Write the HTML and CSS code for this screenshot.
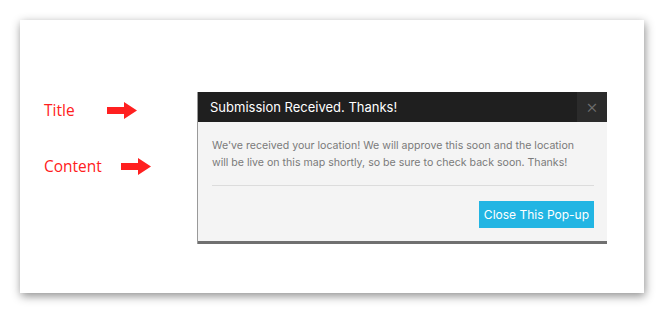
FILE: index.html
```html
<!DOCTYPE html>
<html>
<head>
    <title>Popup annotation</title>
    <link rel="stylesheet" href="styles.css">
</head>
<body>
    <div class="sheet">
        <div class="labels">
            <div class="label-row label-title">
                <span class="label">Title</span>
                <svg class="arrow" width="30" height="17" viewBox="0 0 30 17"><path d="M0 5 H17 V0 L30 8.5 L17 17 V12 H0 Z" fill="#ff2020"/></svg>
            </div>
            <div class="label-row label-content">
                <span class="label">Content</span>
                <svg class="arrow" width="30" height="17" viewBox="0 0 30 17"><path d="M0 5 H17 V0 L30 8.5 L17 17 V12 H0 Z" fill="#ff2020"/></svg>
            </div>
        </div>

        <div class="popup">
            <div class="popup-header">
                <div class="popup-title">Submission Received. Thanks!</div>
                <div class="popup-close">&times;</div>
            </div>
            <div class="popup-body">
                <p class="popup-text">We've received your location! We will approve this soon and the location will be live on this map shortly, so be sure to check back soon. Thanks!</p>
                <div class="popup-footer">
                    <button class="popup-button">Close This Pop-up</button>
                </div>
            </div>
            <div class="popup-map"></div>
        </div>
    </div>
</body>
</html>
```

FILE: styles.css
```css
body {
    margin: 0;
    background: #ffffff;
    font-family: "Inter", "Liberation Sans", sans-serif;
}
.sheet {
    margin: 20px;
    width: 624px;
    height: 273px;
    box-sizing: border-box;
    background: #ffffff;
    box-shadow: 1px 3px 9px rgba(0, 0, 0, 0.45);
    display: flex;
    align-items: flex-start;
    padding: 72px 0 0 24px;
}
.labels {
    width: 153px;
    padding-top: 7px;
}
.label-row {
    display: flex;
    align-items: center;
}
.label {
    color: #ff2020;
    font-family: "Open Sans", sans-serif;
    font-size: 15.5px;
}
.label-title {
    gap: 32px;
}
.label-content {
    gap: 19px;
    margin-top: 34px;
}
.popup {
    width: 410px;
    border-left: 1px solid #9a9a9a;
    box-sizing: border-box;
}
.popup-header {
    display: flex;
    height: 30px;
    background: #1f1f1f;
}
.popup-title {
    flex: 1;
    color: #ffffff;
    font-size: 13px;
    line-height: 30px;
    padding-left: 12px;
}
.popup-close {
    width: 30px;
    background: #2b2b2b;
    color: #6e6e6e;
    font-size: 19px;
    font-weight: 300;
    line-height: 30px;
    text-align: center;
}
.popup-body {
    background: #f4f4f4;
    padding: 15px 13px 13px 14px;
}
.popup-text {
    margin: 0;
    color: #7a7a7a;
    font-size: 10.6px;
    line-height: 17px;
    padding: 0 12px 14px 0;
    border-bottom: 1px solid #dcdcdc;
}
.popup-footer {
    display: flex;
    justify-content: flex-end;
    padding-top: 15px;
}
.popup-button {
    background: #22b5e3;
    color: #ffffff;
    border: none;
    font-family: "Inter", "Liberation Sans", sans-serif;
    font-size: 12px;
    height: 27px;
    padding: 0 5px;
}
.popup-map {
    height: 3px;
    background: #707070;
}
```
